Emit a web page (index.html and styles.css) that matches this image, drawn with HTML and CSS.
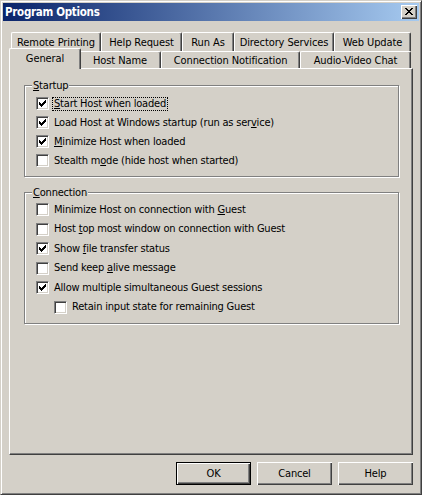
FILE: index.html
```html
<!DOCTYPE html>
<html>
<head>
<meta charset="utf-8">
<title>Program Options</title>
<link rel="stylesheet" href="styles.css">
</head>
<body>
<div class="window">
  <div class="titlebar">
    <span class="title">Program Options</span>
    <span class="close"><svg width="8" height="7" viewBox="0 0 8 7" shape-rendering="crispEdges"><path d="M0 0h2v1h-2z M6 0h2v1h-2z M1 1h2v1h-2z M5 1h2v1h-2z M2 2h4v1h-4z M3 3h2v1h-2z M2 4h4v1h-4z M1 5h2v1h-2z M5 5h2v1h-2z M0 6h2v1h-2z M6 6h2v1h-2z" fill="#000"/></svg></span>
  </div>
  <div class="tabs">
    <div class="tabrow tabrow-back">
      <div class="tab w-rp">Remote Printing</div>
      <div class="tab w-hr">Help Request</div>
      <div class="tab w-ra">Run As</div>
      <div class="tab w-ds">Directory Services</div>
      <div class="tab w-wu">Web Update</div>
    </div>
    <div class="tabrow tabrow-front">
      <div class="tab tab-active w-gen">General</div>
      <div class="tab w-hn">Host Name</div>
      <div class="tab w-cn">Connection Notification</div>
      <div class="tab w-av">Audio-Video Chat</div>
    </div>
  </div>
  <div class="panel">
    <fieldset class="group group-startup">
      <legend class="group-title"><u>S</u>tartup</legend>
      <div class="opt"><span class="box"><svg class="tick" width="7" height="7" viewBox="0 0 7 7" shape-rendering="crispEdges"><path d="M0 2h1v3h-1z M1 3h1v3h-1z M2 4h1v3h-1z M3 3h1v3h-1z M4 2h1v3h-1z M5 1h1v3h-1z M6 0h1v3h-1z" fill="#000"/></svg></span><span class="text focus"><u>S</u>tart Host when loaded</span></div>
      <div class="opt"><span class="box"><svg class="tick" width="7" height="7" viewBox="0 0 7 7" shape-rendering="crispEdges"><path d="M0 2h1v3h-1z M1 3h1v3h-1z M2 4h1v3h-1z M3 3h1v3h-1z M4 2h1v3h-1z M5 1h1v3h-1z M6 0h1v3h-1z" fill="#000"/></svg></span><span class="text">Load Host at Windows startup (run as ser<u>v</u>ice)</span></div>
      <div class="opt"><span class="box"><svg class="tick" width="7" height="7" viewBox="0 0 7 7" shape-rendering="crispEdges"><path d="M0 2h1v3h-1z M1 3h1v3h-1z M2 4h1v3h-1z M3 3h1v3h-1z M4 2h1v3h-1z M5 1h1v3h-1z M6 0h1v3h-1z" fill="#000"/></svg></span><span class="text"><u>M</u>inimize Host when loaded</span></div>
      <div class="opt"><span class="box"></span><span class="text">Stealth m<u>o</u>de (hide host when started)</span></div>
    </fieldset>
    <fieldset class="group group-conn">
      <legend class="group-title"><u>C</u>onnection</legend>
      <div class="opt"><span class="box"></span><span class="text">Minimize Host on connection with <u>G</u>uest</span></div>
      <div class="opt"><span class="box"></span><span class="text">Host <u>t</u>op most window on connection with Guest</span></div>
      <div class="opt"><span class="box"><svg class="tick" width="7" height="7" viewBox="0 0 7 7" shape-rendering="crispEdges"><path d="M0 2h1v3h-1z M1 3h1v3h-1z M2 4h1v3h-1z M3 3h1v3h-1z M4 2h1v3h-1z M5 1h1v3h-1z M6 0h1v3h-1z" fill="#000"/></svg></span><span class="text">Show <u>f</u>ile transfer status</span></div>
      <div class="opt"><span class="box"></span><span class="text">Send keep <u>a</u>live message</span></div>
      <div class="opt"><span class="box"><svg class="tick" width="7" height="7" viewBox="0 0 7 7" shape-rendering="crispEdges"><path d="M0 2h1v3h-1z M1 3h1v3h-1z M2 4h1v3h-1z M3 3h1v3h-1z M4 2h1v3h-1z M5 1h1v3h-1z M6 0h1v3h-1z" fill="#000"/></svg></span><span class="text">Allow multiple simultaneous Guest sessions</span></div>
      <div class="opt opt-sub"><span class="box"></span><span class="text">Retain input state for remaining Guest</span></div>
    </fieldset>
  </div>
  <div class="buttons">
    <button class="btn btn-default">OK</button>
    <button class="btn">Cancel</button>
    <button class="btn">Help</button>
  </div>
</div>
</body>
</html>
```

FILE: styles.css
```css
* { box-sizing: border-box; }
html, body { margin: 0; padding: 0; }
body {
  width: 422px;
  height: 495px;
  background: #d4d0c8;
  font-family: "DejaVu Sans Condensed", "DejaVu Sans", sans-serif;
  font-size: 11px;
  letter-spacing: -0.2px;
  color: #000;
}
.window {
  width: 422px;
  height: 495px;
  background: #d4d0c8;
  border: 1px solid;
  border-color: #d4d0c8 #404040 #404040 #d4d0c8;
  box-shadow: inset 1px 1px #fff, inset -1px -1px #808080;
  padding: 2px;
  display: flex;
  flex-direction: column;
}
.titlebar {
  height: 18px;
  flex: none;
  background: linear-gradient(to right, #0a246a, #a6caf0);
  display: flex;
  align-items: center;
  justify-content: space-between;
  padding-left: 2px;
}
.title {
  color: #fff;
  font-weight: bold;
  font-size: 11.5px;
  letter-spacing: -0.3px;
  line-height: 14px;
}
.close {
  width: 16px;
  height: 14px;
  margin-right: 2px;
  background: #d4d0c8;
  box-shadow: inset 1px 1px #fff, inset -1px -1px #404040, inset -2px -2px #808080;
  display: flex;
  align-items: center;
  justify-content: center;
  padding-bottom: 1px;
}
.close svg { display: block; }

.tabs {
  margin: 11px 8px 0 8px;
  flex: none;
}
.tabrow {
  display: flex;
  align-items: flex-start;
}
.tabrow-back { height: 19px; }
.tabrow-front { height: 17px; }
.tab {
  flex: none;
  background: #d4d0c8;
  border-top: 1px solid #fff;
  border-left: 1px solid #fff;
  border-right: 1px solid #404040;
  box-shadow: inset -1px 0 #808080;
  border-radius: 2px 2px 0 0;
  font-size: 11px;
  letter-spacing: -0.1px;
  line-height: 13px;
  text-align: center;
  white-space: nowrap;
}
.tabrow-back .tab { height: 19px; padding-top: 3px; }
.tabrow-front .tab { height: 17px; padding-top: 2px; }
.tabrow-front .tab-active {
  position: relative;
  z-index: 1;
  height: 21px;
  margin: -3px -2px 0 -2px;
  padding-top: 3px;
}
.w-rp { width: 90px; }
.w-hr { width: 81px; }
.w-ra { width: 52px; }
.w-ds { width: 100px; }
.w-wu { width: 77px; }
.w-gen { width: 72px; }
.w-hn { width: 82px; }
.w-cn { width: 139px; }
.w-av { width: 111px; }

.panel {
  flex: none;
  height: 387px;
  margin: 0 6px;
  border: 1px solid;
  border-color: #fff #404040 #404040 #fff;
  box-shadow: inset -1px -1px #808080;
  padding: 0 0 0 14px;
}
.group {
  width: 375px;
  margin: 10px 0 0 0;
  padding: 2px 0 6px 0;
  border: 1px solid #808080;
  box-shadow: inset 1px 1px #fff, 1px 1px #fff;
  min-width: 0;
}
.group-conn { margin-top: 9px; padding-top: 1px; }
.group-conn .opt { height: 19.5px; }
.group-title {
  margin-left: 7px;
  padding: 0 1px;
  background: #d4d0c8;
  line-height: 13px;
}
.opt {
  height: 19px;
  display: flex;
  align-items: center;
  padding-left: 11px;
}
.opt-sub { padding-left: 29px; }
.box {
  flex: none;
  width: 13px;
  height: 13px;
  background: #fff;
  border: 1px solid;
  border-color: #808080 #fff #fff #808080;
  box-shadow: inset 1px 1px #404040, inset -1px -1px #d4d0c8;
  padding: 2px 0 0 2px;
}
.tick { display: block; }
.text {
  margin-left: 3px;
  padding: 0 1px;
  border: 1px solid transparent;
  line-height: 12px;
  white-space: nowrap;
}
.text.focus { border: 1px dotted #000; }
u { text-underline-offset: 1px; }

.buttons {
  flex: none;
  margin-top: 7px;
  padding-right: 6px;
  display: flex;
  justify-content: flex-end;
  gap: 6px;
}
.btn {
  width: 75px;
  height: 23px;
  padding: 0;
  background: #d4d0c8;
  border: none;
  box-shadow: inset 1px 1px #fff, inset -1px -1px #404040, inset -2px -2px #808080;
  font-family: "DejaVu Sans Condensed", "DejaVu Sans", sans-serif;
  font-size: 11px;
  letter-spacing: -0.2px;
  color: #000;
}
.btn-default {
  border: 1px solid #000;
  box-shadow: inset 1px 1px #fff, inset -1px -1px #404040, inset -2px -2px #808080;
}
```
